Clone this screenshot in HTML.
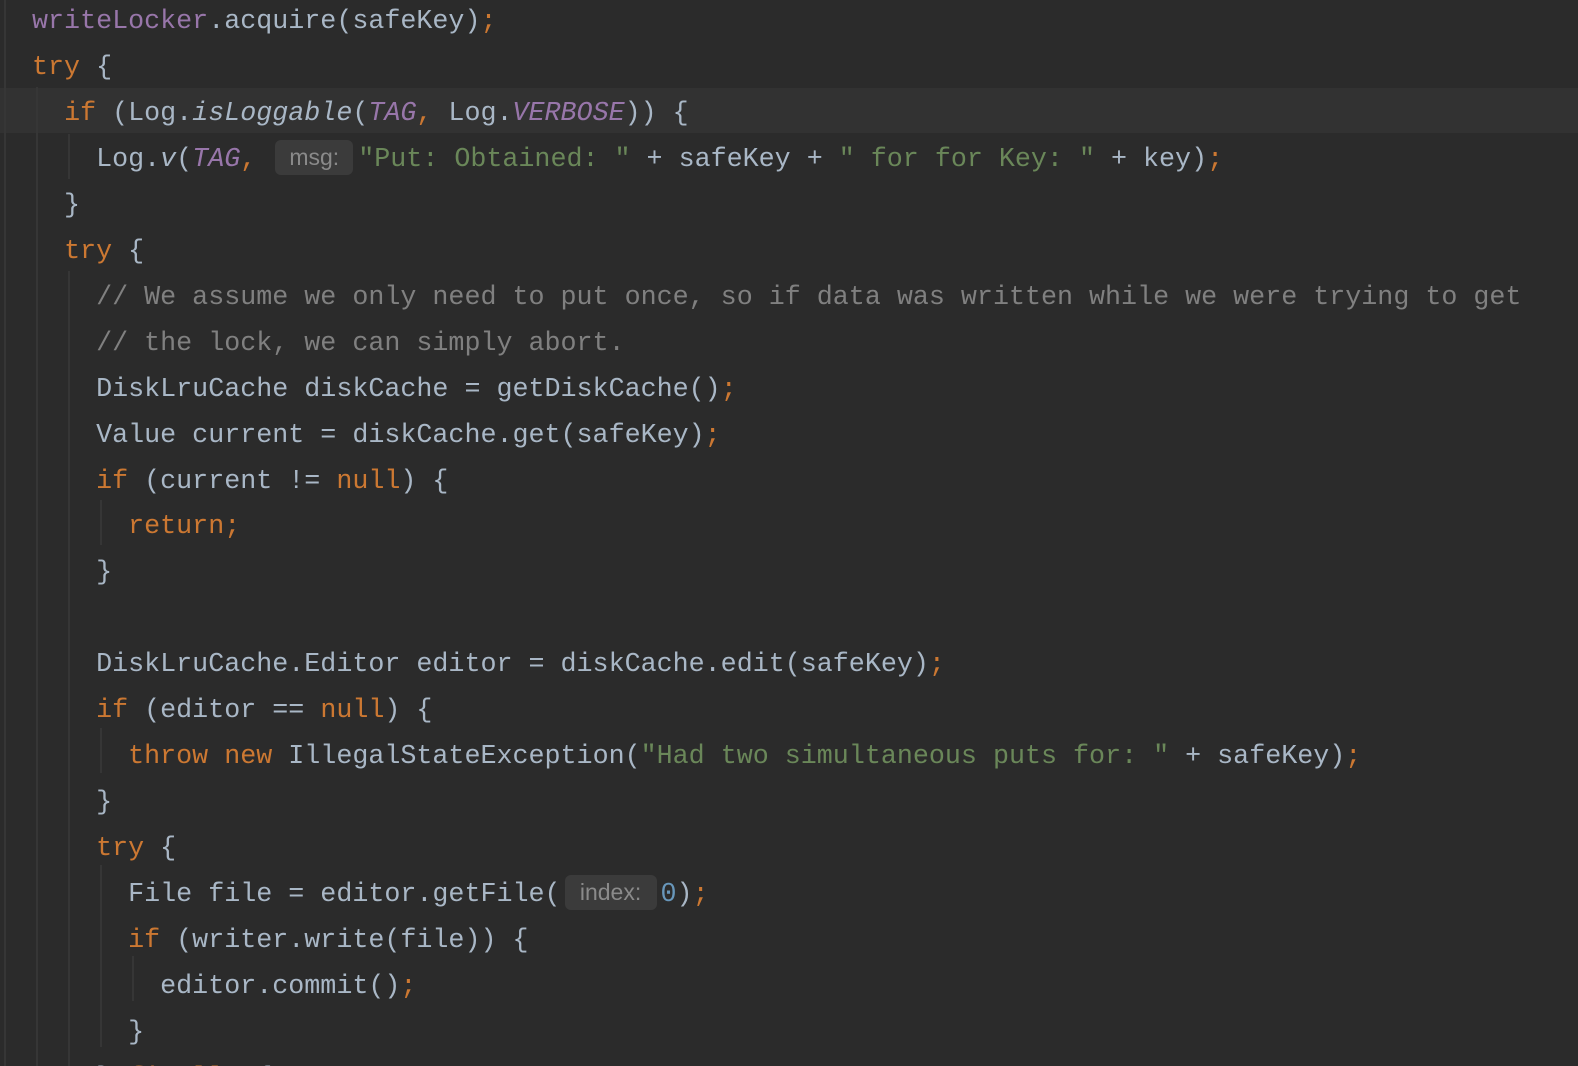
<!DOCTYPE html>
<html><head><meta charset="utf-8"><style>
html,body{margin:0;padding:0;background:#2b2b2b;width:1578px;height:1066px;overflow:hidden}
.wrap{position:relative;width:1578px;height:1066px}
pre{position:absolute;left:0;top:0px;margin:0;font-family:"Liberation Mono",monospace;font-size:26.7px;line-height:45.95px;color:#a9b7c6;white-space:pre}
.k{color:#cc7832}.s{color:#6a8759}.p{color:#9876aa}.c{color:#808080}.n{color:#6897bb}.i{font-style:italic}
.h{display:inline-block;background:#3b3b3b;color:#8a8a8a;font-family:"Liberation Sans",sans-serif;font-size:23px;line-height:35px;border-radius:6px;text-align:center;vertical-align:1px}
.g{position:absolute;width:2px;background:#363636}
.hl{position:absolute;left:0;top:88px;width:1578px;height:45px;background:#323232}
</style></head><body><div class="wrap">
<div class="hl"></div>
<div class="g" style="left:4px;top:0;height:1066px"></div>
<div class="g" style="left:36px;top:87px;height:979px"></div>
<div class="g" style="left:68px;top:134px;height:45px"></div>
<div class="g" style="left:68px;top:271px;height:795px"></div>
<div class="g" style="left:100px;top:500px;height:45px"></div>
<div class="g" style="left:100px;top:728px;height:45px"></div>
<div class="g" style="left:100px;top:865px;height:182px"></div>
<div class="g" style="left:132px;top:956px;height:45px"></div>
<pre>  <span class="p">writeLocker</span>.acquire(safeKey)<span class="k">;</span>
  <span class="k">try</span> {
    <span class="k">if</span> (Log.<span class="i">isLoggable</span>(<span class="p i">TAG</span><span class="k">,</span> Log.<span class="p i">VERBOSE</span>)) {
      Log.<span class="i">v</span>(<span class="p i">TAG</span><span class="k">,</span> <span class="h" style="width:78px;margin-left:3px;margin-right:5px">msg:</span><span class="s">"Put: Obtained: "</span> + safeKey + <span class="s">" for for Key: "</span> + key)<span class="k">;</span>
    }
    <span class="k">try</span> {
      <span class="c">// We assume we only need to put once, so if data was written while we were trying to get</span>
      <span class="c">// the lock, we can simply abort.</span>
      DiskLruCache diskCache = getDiskCache()<span class="k">;</span>
      Value current = diskCache.get(safeKey)<span class="k">;</span>
      <span class="k">if</span> (current != <span class="k">null</span>) {
        <span class="k">return;</span>
      }

      DiskLruCache.Editor editor = diskCache.edit(safeKey)<span class="k">;</span>
      <span class="k">if</span> (editor == <span class="k">null</span>) {
        <span class="k">throw new</span> IllegalStateException(<span class="s">"Had two simultaneous puts for: "</span> + safeKey)<span class="k">;</span>
      }
      <span class="k">try</span> {
        File file = editor.getFile(<span class="h" style="width:92px;margin-left:4px;margin-right:4px">index:</span><span class="n">0</span>)<span class="k">;</span>
        <span class="k">if</span> (writer.write(file)) {
          editor.commit()<span class="k">;</span>
        }
      } <span class="k">finally</span> {
</pre>
</div></body></html>
